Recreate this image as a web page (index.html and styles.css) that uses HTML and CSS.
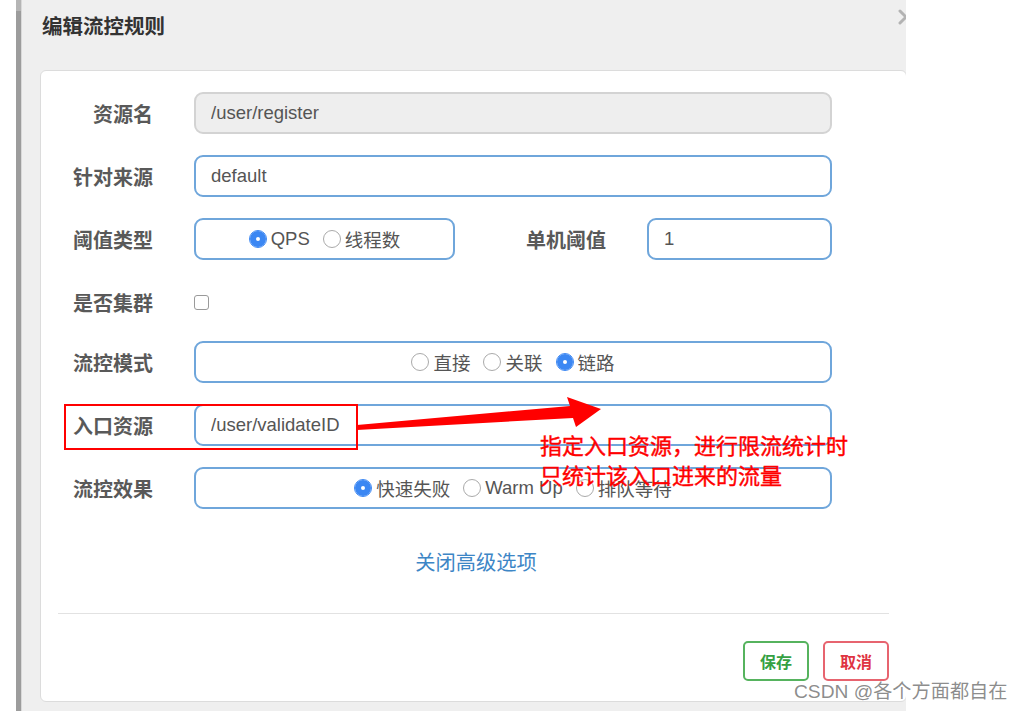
FILE: index.html
```html
<!DOCTYPE html>
<html lang="zh-CN">
<head>
    <meta charset="UTF-8">
    <meta name="viewport" content="width=device-width, initial-scale=1.0">
    <title>编辑流控规则</title>
    <link rel="stylesheet" href="styles.css">
</head>
<body>
<div class="page">
    <div class="shot">
        <div class="gutter"></div>
        <div class="side-bar"></div>
        <div class="modal">
            <div class="modal-header">
                <h4 class="modal-title">编辑流控规则</h4>
                <svg class="close" viewBox="0 0 16 16" width="16" height="16">
                    <path d="M2 2 L14 14 M14 2 L2 14" stroke="#b3b3b3" stroke-width="3" stroke-linecap="round"/>
                </svg>
            </div>
            <div class="card">
                <form class="rule-form">
                    <div class="form-row">
                        <label class="row-label">资源名</label>
                        <input class="field disabled" type="text" value="/user/register" disabled>
                    </div>
                    <div class="form-row">
                        <label class="row-label">针对来源</label>
                        <input class="field" type="text" value="default">
                    </div>
                    <div class="form-row">
                        <label class="row-label">阈值类型</label>
                        <div class="field radio-box short">
                            <label class="radio"><input type="radio" name="grade" checked>QPS</label>
                            <label class="radio"><input type="radio" name="grade">线程数</label>
                        </div>
                        <label class="row-label inline">单机阈值</label>
                        <input class="field count" type="text" value="1">
                    </div>
                    <div class="form-row check-row">
                        <label class="row-label">是否集群</label>
                        <input class="check" type="checkbox">
                    </div>
                    <div class="form-row">
                        <label class="row-label">流控模式</label>
                        <div class="field radio-box">
                            <label class="radio"><input type="radio" name="strategy">直接</label>
                            <label class="radio"><input type="radio" name="strategy">关联</label>
                            <label class="radio"><input type="radio" name="strategy" checked>链路</label>
                        </div>
                    </div>
                    <div class="form-row">
                        <label class="row-label">入口资源</label>
                        <input class="field" type="text" value="/user/validateID">
                    </div>
                    <div class="form-row">
                        <label class="row-label">流控效果</label>
                        <div class="field radio-box">
                            <label class="radio"><input type="radio" name="behavior" checked>快速失败</label>
                            <label class="radio"><input type="radio" name="behavior">Warm Up</label>
                            <label class="radio"><input type="radio" name="behavior">排队等待</label>
                        </div>
                    </div>
                </form>
                <div class="toggle"><a href="#">关闭高级选项</a></div>
                <hr class="divider">
                <div class="footer">
                    <button class="btn btn-save" type="button">保存</button>
                    <button class="btn btn-cancel" type="button">取消</button>
                </div>
            </div>
        </div>
    </div>

    <!-- red markup drawn over the screenshot -->
    <div class="mark-box"></div>
    <svg class="mark-arrow" width="260" height="40" viewBox="350 394 260 40">
        <polygon fill="#f00" points="357,425 570,406 567,397 601,409 576,427 573,418 357,430"/>
    </svg>
    <div class="mark-note">指定入口资源，进行限流统计时<br>只统计该入口进来的流量</div>

    <div class="watermark">CSDN @各个方面都自在</div>
</div>
</body>
</html>
```

FILE: styles.css
```css
body {
    margin: 0;
    background: #fff;
    font-family: "Liberation Sans", "Noto Sans CJK SC", sans-serif;
}
.page {
    position: relative;
    width: 1021px;
    height: 711px;
    overflow: hidden;
}
.shot {
    display: flex;
    width: 906px;
    height: 711px;
    overflow: hidden;
}
.gutter {
    flex: none;
    width: 16px;
}
.side-bar {
    flex: none;
    width: 5px;
    background: linear-gradient(#b5b5b5 0 11px, #9c9c9c 11px);
}
.modal {
    flex: none;
    width: 885px;
    box-sizing: border-box;
    padding-left: 18px;
    background: #efefef;
    border-left: 1px solid #d9d9d9;
}
.modal-header {
    position: relative;
    height: 70px;
}
.modal-title {
    margin: 0;
    padding: 13px 0 0 2px;
    font-size: 20.5px;
    line-height: 28px;
    font-weight: bold;
    color: #333;
}
.close {
    position: absolute;
    top: 9px;
    right: -8px;
}

/* form card */
.card {
    width: 867px;
    box-sizing: border-box;
    padding: 21px 17px 20px;
    background: #fff;
    border: 1px solid #dcdcdc;
    border-radius: 6px;
}
.rule-form {
    display: flex;
    flex-direction: column;
    gap: 21px;
}
.form-row {
    display: flex;
    align-items: center;
    height: 42px;
}
.check-row {
    height: 39px;
    padding-top: 4px;
    box-sizing: border-box;
}
.row-label {
    flex: none;
    width: 95px;
    margin-right: 41px;
    text-align: right;
    font-size: 20px;
    font-weight: bold;
    color: #595959;
}
.row-label.inline {
    width: 151px;
}
.field {
    flex: none;
    width: 638px;
    height: 42px;
    box-sizing: border-box;
    padding: 0 15px;
    border: 2px solid #6fa6db;
    border-radius: 9px;
    background: #fff;
    font-family: inherit;
    font-size: 18.5px;
    color: #555;
    outline: none;
}
.field.disabled {
    background: #eee;
    border-color: #d3d3d3;
}
.field.short {
    width: 261px;
}
.field.count {
    width: 185px;
}
.radio-box {
    display: flex;
    align-items: center;
    justify-content: center;
    gap: 13px;
}
.radio {
    display: flex;
    align-items: center;
    font-size: 18.5px;
    color: #555;
}
.radio input {
    appearance: none;
    flex: none;
    width: 18px;
    height: 18px;
    box-sizing: border-box;
    margin: 0 4px 0 0;
    border: 1px solid #aaa;
    border-radius: 50%;
    background: #fff;
}
.radio input:checked {
    border-color: #3b87f3;
    box-shadow: inset 0 0 0 6px #3b87f3;
}
.check {
    appearance: none;
    width: 15px;
    height: 15px;
    margin: 0;
    border: 1px solid #9a9a9a;
    border-radius: 3px;
}
.toggle {
    margin-top: 40px;
    padding-left: 5px;
    text-align: center;
}
.toggle a {
    font-size: 20.3px;
    line-height: 28px;
    color: #3d86c6;
    text-decoration: none;
}
.divider {
    margin: 36px 0 0;
    border: 0;
    border-top: 1px solid #e2e2e2;
}
.footer {
    display: flex;
    justify-content: flex-end;
    gap: 14px;
    padding-top: 27px;
}
.btn {
    width: 66px;
    height: 40px;
    padding: 0;
    border-radius: 5px;
    background: #fff;
    font-family: inherit;
    font-size: 16px;
    font-weight: bold;
}
.btn-save {
    border: 2px solid #56b35e;
    color: #35a143;
}
.btn-cancel {
    border: 2px solid #e7646f;
    color: #df3442;
}

/* annotation */
.mark-box {
    position: absolute;
    left: 64px;
    top: 404px;
    width: 294px;
    height: 46px;
    box-sizing: border-box;
    border: 2px solid #f00;
}
.mark-arrow {
    position: absolute;
    left: 350px;
    top: 394px;
}
.mark-note {
    position: absolute;
    left: 540px;
    top: 429px;
    font-family: "Noto Sans CJK SC", sans-serif;
    font-size: 22px;
    line-height: 30px;
    color: #f00;
    -webkit-text-stroke: 0.4px #f00;
    white-space: nowrap;
}
.watermark {
    position: absolute;
    left: 794px;
    top: 680px;
    font-size: 19.2px;
    line-height: 24px;
    color: rgba(120, 120, 120, 0.85);
    white-space: nowrap;
}
```
